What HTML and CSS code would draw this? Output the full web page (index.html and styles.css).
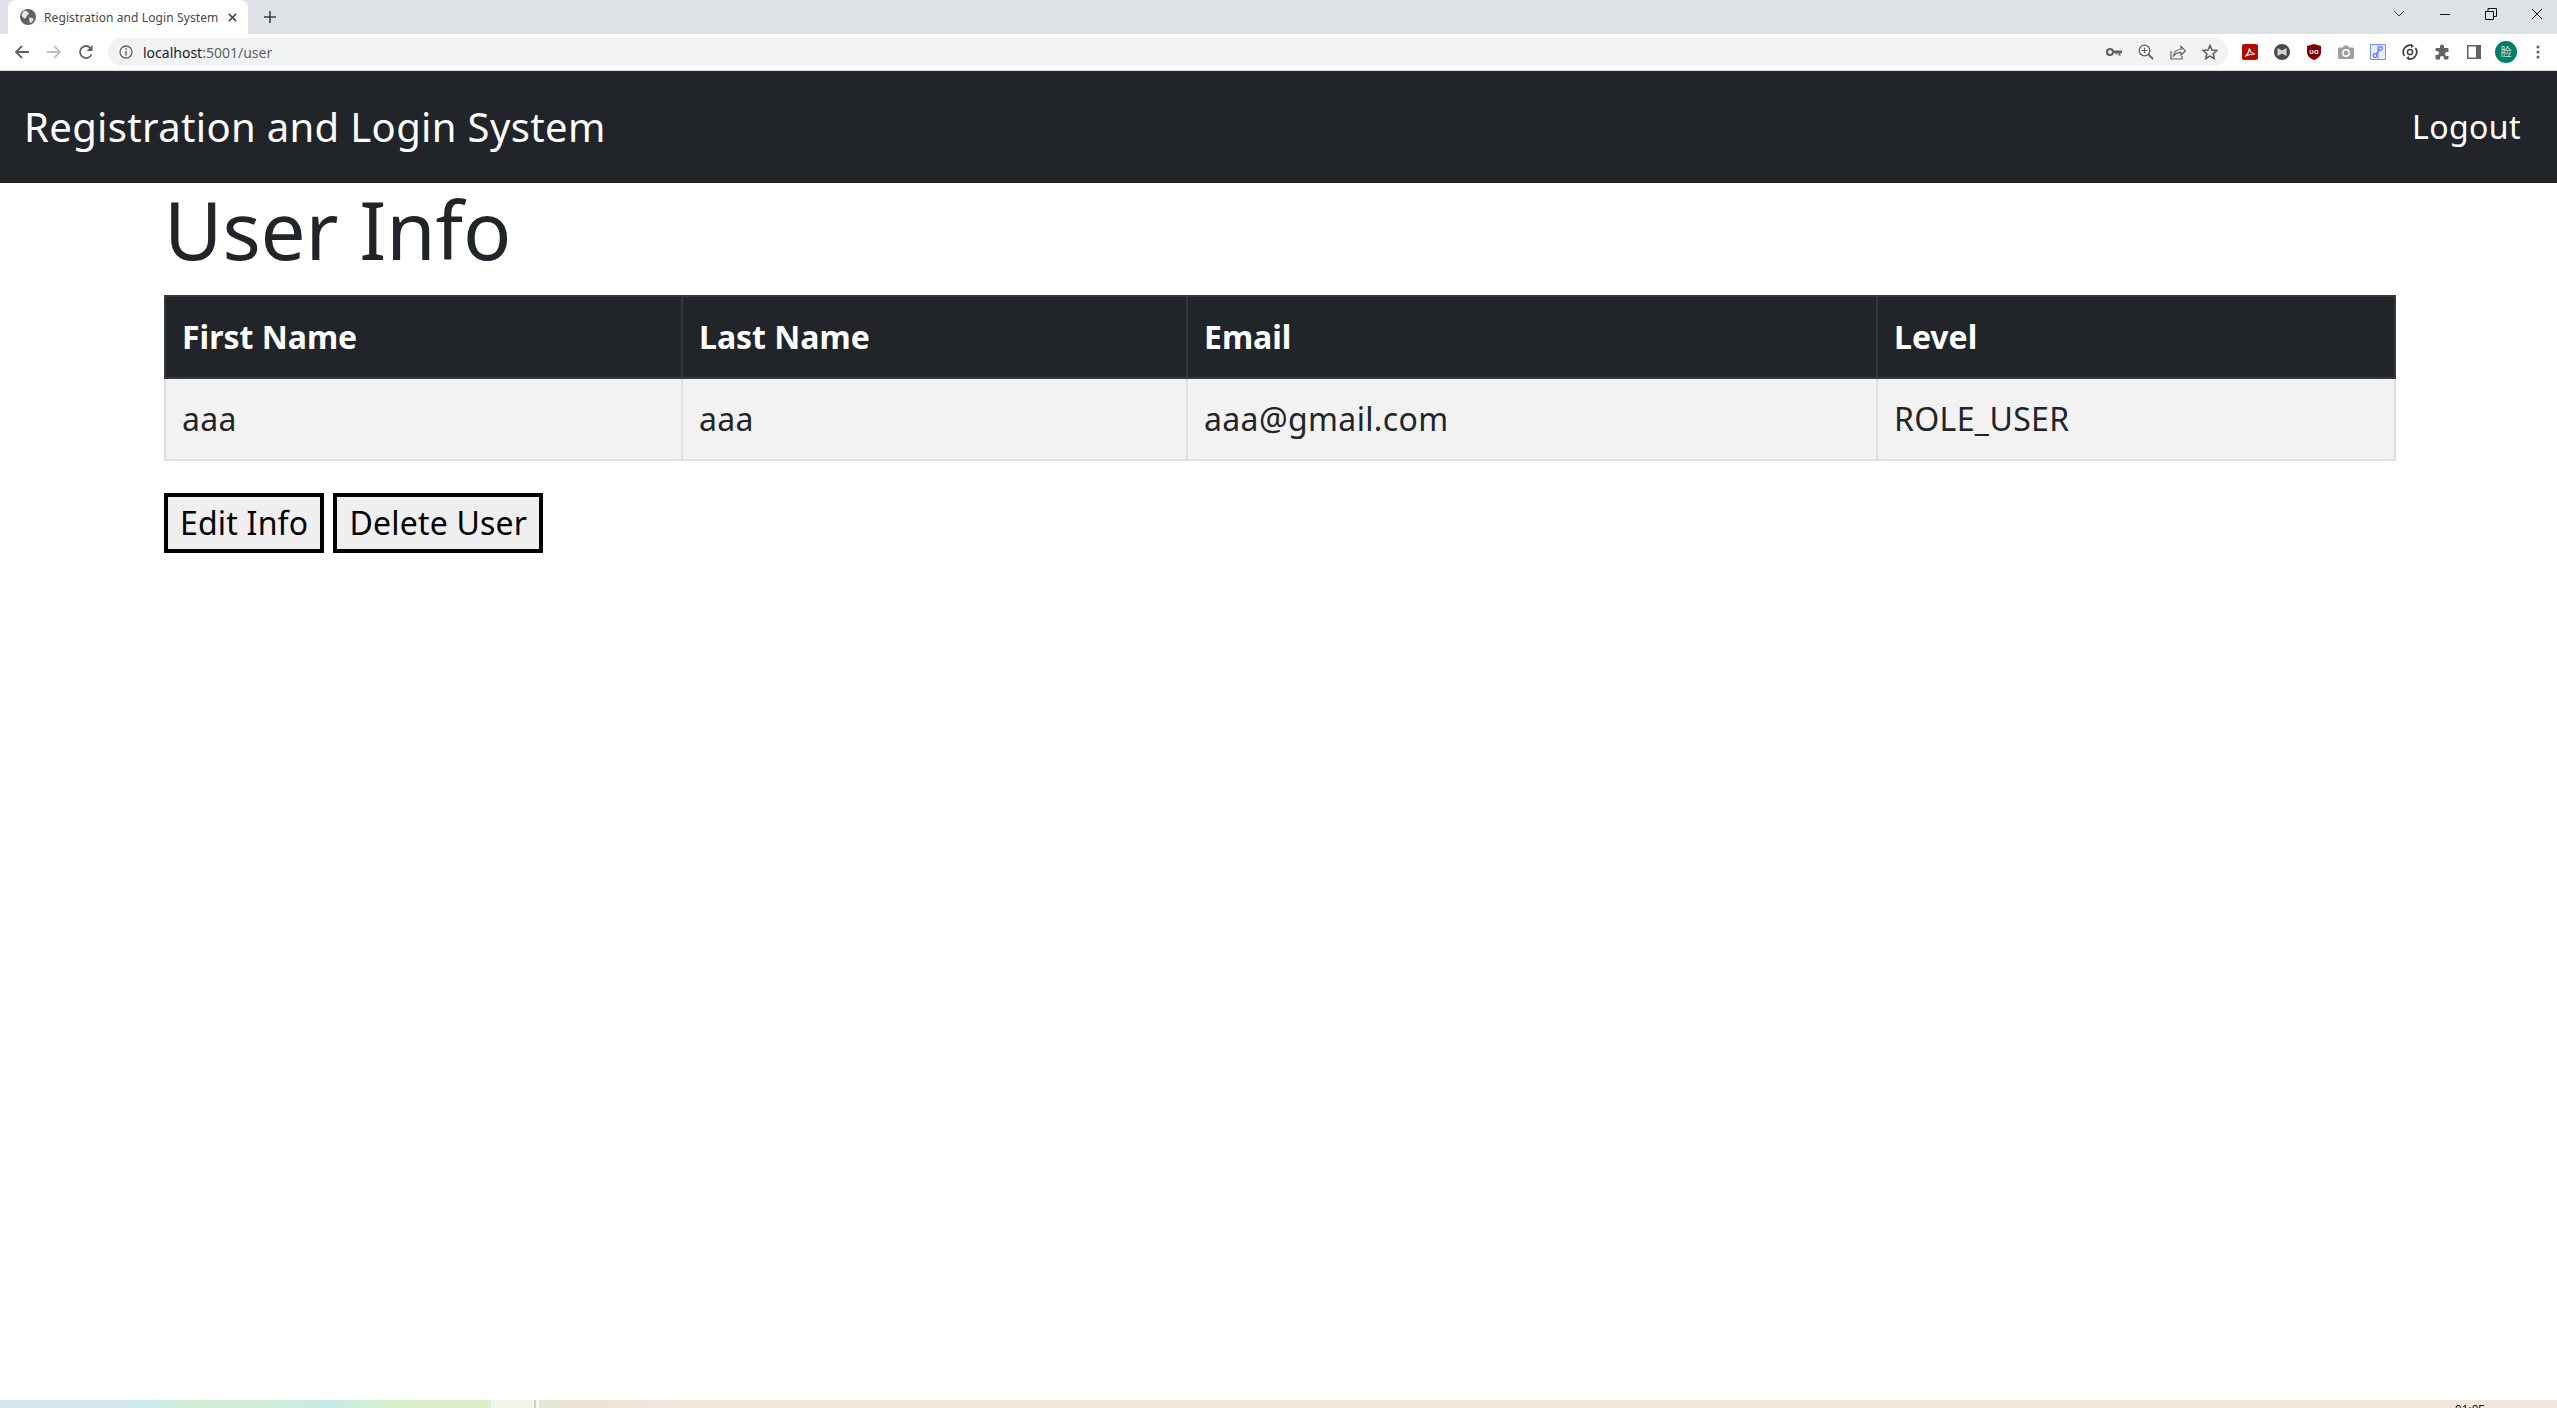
FILE: index.html
```html
<!DOCTYPE html>
<html lang="en">
<head>
    <meta charset="UTF-8">
    <title>Registration and Login System</title>
    <link rel="stylesheet" href="styles.css">
</head>
<body>

<!-- browser tab strip -->
<div class="tabstrip">
    <div class="tab">
        <svg class="favicon" viewBox="0 0 16 16"><circle cx="8" cy="8" r="8" fill="#5f6368"/><path d="M5 1.500l3 1.500 1 2-2 1.500-1 2.500-2 .5L1.500 6.500 3 3zM9 8.500l4 .5.5 2-2.500 3-1.500-1z" fill="#e8eaed"/></svg>
        <span class="tab-title">Registration and Login System</span>
        <svg class="tab-close" viewBox="0 0 10 10"><path d="M1 1l8 8M9 1l-8 8" stroke="#45484c" stroke-width="1.700"/></svg>
    </div>
    <svg class="new-tab" viewBox="0 0 12 12"><path d="M6 0v12M0 6h12" stroke="#3c4043" stroke-width="1.600"/></svg>
    <div class="window-controls">
        <div class="win-btn"><svg width="12" height="8" viewBox="0 0 12 8"><path d="M1 1l5 5 5-5" fill="none" stroke="#3c4043" stroke-width="1"/></svg></div>
        <div class="win-btn"><svg width="12" height="12" viewBox="0 0 12 12"><path d="M1 6.500h10" stroke="#111" stroke-width="1"/></svg></div>
        <div class="win-btn"><svg width="12" height="12" viewBox="0 0 12 12"><path d="M.5 3.500h8v8h-8zM3 3.500v-3h8.500v8h-3" fill="none" stroke="#111" stroke-width="1"/></svg></div>
        <div class="win-btn win-close"><svg width="12" height="12" viewBox="0 0 12 12"><path d="M1 1l10 10M11 1L1 11" stroke="#111" stroke-width="1"/></svg></div>
    </div>
</div>

<!-- browser toolbar -->
<div class="toolbar">
    <div class="tool"><svg width="16" height="16" viewBox="0 0 16 16"><path d="M15 8H2M8 2L2 8l6 6" fill="none" stroke="#5f6368" stroke-width="1.800"/></svg></div>
    <div class="tool"><svg width="16" height="16" viewBox="0 0 16 16"><path d="M1 8h13M8 2l6 6-6 6" fill="none" stroke="#bdc1c6" stroke-width="1.800"/></svg></div>
    <div class="tool"><svg width="16" height="16" viewBox="0 0 16 16"><path d="M13.500 10.500A6 6 0 1 1 12.500 4" fill="none" stroke="#5f6368" stroke-width="1.800"/><path d="M14.500 1v6h-6z" fill="#5f6368"/></svg></div>
    <div class="omnibox">
        <svg class="info" width="14" height="14" viewBox="0 0 14 14"><circle cx="7" cy="7" r="6" fill="none" stroke="#5f6368" stroke-width="1.300"/><path d="M7 6v4.500M7 3.300v1.500" stroke="#5f6368" stroke-width="1.400"/></svg>
        <span class="url"><span class="url-host">localhost</span>:5001/user</span>
        <div class="omni-actions">
            <div class="tool"><svg width="16" height="10" viewBox="0 0 16 10"><circle cx="4" cy="5" r="3" fill="none" stroke="#5f6368" stroke-width="2.200"/><path d="M7 3.500h9v2.500h-1.500v2.500h-2V6h-1v1.500H9.500V6H7z" fill="#5f6368"/></svg></div>
            <div class="tool"><svg width="16" height="16" viewBox="0 0 16 16"><circle cx="6.500" cy="6.500" r="5.300" fill="none" stroke="#5f6368" stroke-width="1.300"/><path d="M10.500 10.500L15 15" stroke="#5f6368" stroke-width="1.800"/><path d="M6.500 3.800v5.400M3.800 6.500h5.400" stroke="#5f6368" stroke-width="1.200"/></svg></div>
            <div class="tool"><svg width="16" height="16" viewBox="0 0 16 16"><path d="M1 7v8h11v-3" fill="none" stroke="#5f6368" stroke-width="1.200"/><path d="M3.500 12c.5-4 3.500-6.500 7.500-6.500V2.500l4.500 4.300-4.500 4.200V8.300C8 8.300 5.500 9.500 3.500 12z" fill="none" stroke="#5f6368" stroke-width="1.200"/></svg></div>
            <div class="tool"><svg width="16" height="16" viewBox="0 0 16 16"><path d="M8 1.500l2 4.500 4.800.5-3.600 3.200 1 4.800L8 12.100l-4.200 2.400 1-4.800L1.200 6.500 6 6z" fill="none" stroke="#5f6368" stroke-width="1.600"/></svg></div>
        </div>
    </div>
    <div class="extensions">
        <div class="tool"><svg width="16" height="16" viewBox="0 0 16 16"><rect width="16" height="16" rx="2" fill="#b30b00"/><path d="M3 12.500c2-1 3.500-3.500 4.500-8 .5 3 2 5 5.500 5.500-3 0-6 .5-8 1.500" fill="none" stroke="#fff" stroke-width="1.200"/></svg></div>
        <div class="tool"><svg width="16" height="16" viewBox="0 0 16 16"><circle cx="8" cy="8" r="8" fill="#4a4a4a"/><path d="M3.500 4L8 6.500 12.500 4v8L8 9.500 3.500 12z" fill="#d6d6d6"/></svg></div>
        <div class="tool"><svg width="14" height="16" viewBox="0 0 14 16"><path d="M7 0l7 2v6c0 4-3 6.500-7 8-4-1.500-7-4-7-8V2z" fill="#800000"/><text class="ublock-text" x="7" y="9.500" text-anchor="middle">UO</text></svg></div>
        <div class="tool"><svg width="16" height="14" viewBox="0 0 16 14"><path d="M1.500 2.500H5L6 .5h4l1 2h3.500a1.500 1.500 0 0 1 1.500 1.500v8.500a1.500 1.500 0 0 1-1.500 1.500h-13A1.500 1.500 0 0 1 0 12.500V4a1.500 1.500 0 0 1 1.500-1.500z" fill="#9e9e9e"/><circle cx="8" cy="8" r="3.200" fill="none" stroke="#fff" stroke-width="1.500"/></svg></div>
        <div class="tool"><svg width="16" height="16" viewBox="0 0 16 16"><path d="M.5.500h15v15H.5zM8 .5v15" fill="#e8edff" stroke="#7e90f5"/><circle cx="5" cy="11.500" r="1.800" fill="none" stroke="#5d72ee" stroke-width="1.200"/><circle cx="10.500" cy="4.500" r="1.800" fill="none" stroke="#5d72ee" stroke-width="1.200"/><path d="M6 10l3.500-4.200" stroke="#5d72ee" stroke-width="1.200"/></svg></div>
        <div class="tool"><svg width="16" height="16" viewBox="0 0 16 16"><path d="M2.500 12A7 7 0 0 1 10 1.300M13.500 4A7 7 0 0 1 6 14.700" fill="none" stroke="#3f3f3f" stroke-width="1.700"/><path d="M9 0v4l3-2zM7 16v-4l-3 2z" fill="#3f3f3f"/><circle cx="8" cy="8" r="2.600" fill="none" stroke="#3f3f3f" stroke-width="1.500"/></svg></div>
        <div class="tool"><svg width="16" height="16" viewBox="0 0 16 16"><path d="M6 2.500a2 2 0 0 1 4 0V4h3.500a1 1 0 0 1 1 1v3H13a2 2 0 0 0 0 4h1.500v2.500a1 1 0 0 1-1 1H10V14a2 2 0 0 0-4 0v1.500H2.500a1 1 0 0 1-1-1V11H3a2 2 0 0 0 0-4H1.500V5a1 1 0 0 1 1-1H6z" fill="#5f6368"/></svg></div>
        <div class="tool"><svg width="14" height="14" viewBox="0 0 14 14"><path d="M0 0h14v14H0zM1.500 1.500v11H9v-11z" fill="#5f6368" fill-rule="evenodd"/></svg></div>
        <div class="tool"><span class="avatar">脸</span></div>
        <div class="tool"><svg width="4" height="14" viewBox="0 0 4 14"><circle cx="2" cy="2" r="1.500" fill="#5f6368"/><circle cx="2" cy="7" r="1.500" fill="#5f6368"/><circle cx="2" cy="12" r="1.500" fill="#5f6368"/></svg></div>
    </div>
</div>

<!-- page -->
<nav class="navbar">
    <a class="navbar-brand">Registration and Login System</a>
    <a class="nav-link">Logout</a>
</nav>

<div class="container">
    <h1>User Info</h1>
    <table class="info-table">
        <thead>
            <tr>
                <th class="col-first">First Name</th>
                <th class="col-last">Last Name</th>
                <th class="col-email">Email</th>
                <th class="col-level">Level</th>
            </tr>
        </thead>
        <tbody>
            <tr>
                <td>aaa</td>
                <td>aaa</td>
                <td>aaa@gmail.com</td>
                <td>ROLE_USER</td>
            </tr>
        </tbody>
    </table>
    <div class="actions">
        <button>Edit Info</button>
        <button>Delete User</button>
    </div>
</div>

<!-- sliver of the taskbar at the bottom of the capture -->
<div class="taskbar">
    <div class="task-colors"></div>
    <div class="task-pale"></div>
    <div class="task-main"><span class="clock">01:05</span></div>
</div>

</body>
</html>
```

FILE: styles.css
```css
:root {
    --dark: #212529;
    --text: #212529;
    --chrome-bg: #dee1e6;
    --omni-bg: #f1f3f4;
    --icon: #5f6368;
}
html {
    box-sizing: border-box;
}
*, *:before, *:after {
    box-sizing: inherit;
}
body {
    margin: 0;
    height: 100vh;
    display: flex;
    flex-direction: column;
    overflow: hidden;
    font-family: "Noto Sans", "Open Sans", "Noto Sans CJK SC", sans-serif;
    color: var(--text);
    background: #fff;
}

/* browser chrome */
.tabstrip {
    height: 34px;
    flex-shrink: 0;
    display: flex;
    align-items: center;
    background: var(--chrome-bg);
    padding-left: 8px;
}
.tab {
    width: 240px;
    height: 34px;
    display: flex;
    align-items: center;
    padding-left: 12px;
    background: #fff;
    border-radius: 8px 8px 0 0;
}
.favicon {
    width: 16px;
    height: 16px;
    flex-shrink: 0;
}
.tab-title {
    margin-left: 8px;
    font-size: 12px;
    letter-spacing: 0.1px;
    color: #45484c;
    white-space: nowrap;
}
.tab-close {
    width: 9px;
    height: 9px;
    margin-left: 10px;
    flex-shrink: 0;
}
.new-tab {
    width: 12px;
    height: 12px;
    margin-left: 16px;
}
.window-controls {
    margin-left: auto;
    align-self: flex-start;
    display: flex;
}
.win-btn {
    width: 46px;
    height: 28px;
    display: flex;
    align-items: center;
    justify-content: center;
}
.win-close {
    width: 40px;
    margin-left: 3px;
}
.toolbar {
    height: 37px;
    flex-shrink: 0;
    display: flex;
    align-items: flex-start;
    padding: 4px 3px 0 6px;
    background: #fff;
    border-bottom: 1px solid #dadce0;
}
.tool {
    width: 32px;
    height: 28px;
    flex-shrink: 0;
    display: flex;
    align-items: center;
    justify-content: center;
}
.omnibox {
    flex: 1;
    height: 28px;
    margin-left: 6px;
    display: flex;
    align-items: center;
    padding-left: 11px;
    background: var(--omni-bg);
    border-radius: 14px;
}
.url {
    margin-left: 10px;
    font-size: 14px;
    color: var(--icon);
}
.url-host {
    color: #202124;
}
.omni-actions {
    margin-left: auto;
    display: flex;
    padding-right: 2px;
}
.extensions {
    display: flex;
    margin-left: 6px;
}
.ublock-text {
    font-size: 6px;
    font-weight: 700;
    fill: #fff;
}
.avatar {
    width: 22px;
    height: 22px;
    border-radius: 50%;
    background: #00806b;
    color: #cfe8e2;
    font-size: 11px;
    line-height: 22px;
    text-align: center;
}

/* page */
.navbar {
    height: 112px;
    flex-shrink: 0;
    display: flex;
    align-items: center;
    justify-content: space-between;
    padding: 0 36px 1px 24px;
    background: var(--dark);
    color: #fff;
}
.navbar-brand {
    font-size: 40px;
    letter-spacing: 0.35px;
}
.nav-link {
    font-size: 32px;
    letter-spacing: 0.4px;
}
.container {
    flex: 1;
    padding: 0 160px 0 164px;
}
h1 {
    margin: 0 0 20px;
    font-size: 80px;
    font-weight: 400;
    line-height: 92px;
    letter-spacing: -0.1px;
}
.info-table {
    width: 2230px;
    table-layout: fixed;
    border-collapse: collapse;
    font-size: 32px;
}
.col-first { width: 517px; }
.col-last { width: 505px; }
.col-email { width: 690px; }
.col-level { width: 518px; }
.info-table th,
.info-table td {
    height: 82px;
    padding: 0 16px;
    text-align: left;
    line-height: 48px;
}
.info-table th {
    background: var(--dark);
    color: #fff;
    font-weight: 700;
    border: 2px solid #32383e;
}
.info-table td {
    background: #f2f2f2;
    letter-spacing: 0.35px;
    border: 2px solid #dee2e6;
}
.actions {
    display: flex;
    gap: 9px;
    margin-top: 32px;
}
.actions button {
    height: 60px;
    padding: 0 12px 2px;
    border: 4px solid #000;
    background: #efefef;
    color: #000;
    font-family: inherit;
    font-size: 32px;
    letter-spacing: 0.2px;
}

/* taskbar sliver */
.taskbar {
    height: 8px;
    flex-shrink: 0;
    display: flex;
    overflow: hidden;
}
.task-colors {
    width: 491px;
    background: linear-gradient(90deg, #d5e4ee 0%, #d4e6ee 25%, #c9ebe8 30%, #d3edd3 40%, #d0ecd8 55%, #c8ebe9 68%, #d8f0c8 80%, #dcefca 100%);
}
.task-pale {
    width: 45px;
    background: #f0f5ec;
    border-right: 2px solid #cfcfc4;
}
.task-main {
    flex: 1;
    position: relative;
    background: linear-gradient(90deg, #e8e5d5 0%, #f3e6da 8%, #f2e6dc 100%);
    border-left: 3px solid #f5f5ef;
}
.clock {
    position: absolute;
    top: 3px;
    left: 1916px;
    font-family: "Liberation Sans", sans-serif;
    font-size: 12px;
    line-height: 14px;
    color: #111;
}
```
